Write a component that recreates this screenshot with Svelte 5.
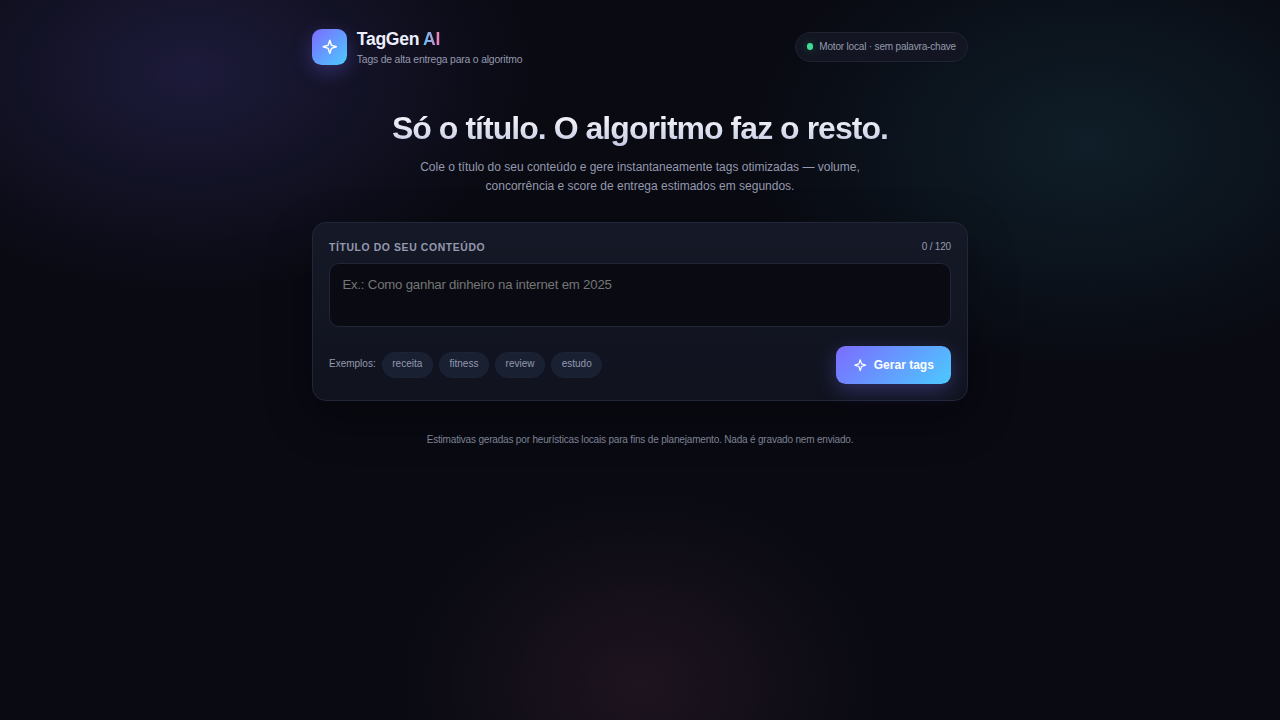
<script lang="ts">
	const maxLength = 120;
	const examples = [
		{ label: 'receita', title: 'Receita de bolo de cenoura fofinho' },
		{ label: 'fitness', title: 'Treino fitness em casa para iniciantes' },
		{ label: 'review', title: 'Review completo do novo celular' },
		{ label: 'estudo', title: 'Como criar um plano de estudo' }
	];

	let title = $state('');
</script>

{#snippet spark()}
	<svg class="spark" viewBox="0 0 24 24" aria-hidden="true">
		<path d="M12 3l2.2 6.8L21 12l-6.8 2.2L12 21l-2.2-6.8L3 12l6.8-2.2z" />
	</svg>
{/snippet}

<div class="page">
	<main class="shell">
		<header class="topbar">
			<div class="brand">
				<div class="logo">{@render spark()}</div>
				<div>
					<p class="name">TagGen <span>AI</span></p>
					<p class="tagline">Tags de alta entrega para o algoritmo</p>
				</div>
			</div>
			<div class="status"><span class="dot"></span>Motor local · sem palavra-chave</div>
		</header>

		<section class="hero">
			<h1>Só o título. O algoritmo faz o resto.</h1>
			<p>
				Cole o título do seu conteúdo e gere instantaneamente tags otimizadas — volume,
				concorrência e score de entrega estimados em segundos.
			</p>
		</section>

		<section class="card">
			<div class="field-head">
				<label for="title">Título do seu conteúdo</label>
				<span class="count">{title.length} / {maxLength}</span>
			</div>
			<textarea
				id="title"
				maxlength={maxLength}
				placeholder="Ex.: Como ganhar dinheiro na internet em 2025"
				bind:value={title}
			></textarea>
			<div class="actions">
				<div class="examples">
					<span>Exemplos:</span>
					{#each examples as example (example.label)}
						<button class="chip" type="button" onclick={() => (title = example.title)}>
							{example.label}
						</button>
					{/each}
				</div>
				<button class="generate" type="button">{@render spark()}Gerar tags</button>
			</div>
		</section>

		<footer>
			Estimativas geradas por heurísticas locais para fins de planejamento. Nada é gravado nem
			enviado.
		</footer>
	</main>
</div>

<style>
	:global(body) {
		background: #090a12;
	}

	.page {
		box-sizing: border-box;
		min-height: 100vh;
		background:
			radial-gradient(340px 220px at 15% 10%, rgba(124, 108, 255, 0.17), transparent),
			radial-gradient(340px 225px at 85% 20%, rgba(60, 190, 220, 0.11), transparent),
			radial-gradient(240px 195px at 50% 95%, rgba(255, 122, 170, 0.085), transparent),
			#090a12;
		color: #eceefb;
		font-family: 'Liberation Sans', Arial, sans-serif;
	}

	.shell {
		box-sizing: border-box;
		width: 656px;
		margin: 0 auto;
		padding-top: 28px;
	}

	h1,
	p {
		margin: 0;
	}

	button,
	textarea {
		font-family: inherit;
	}

	.spark {
		width: 17.6px;
		height: 17.6px;
		fill: none;
		stroke: #fff;
		stroke-width: 2;
		stroke-linejoin: round;
	}

	.topbar,
	.brand,
	.status,
	.field-head,
	.actions,
	.examples,
	.generate {
		display: flex;
		align-items: center;
	}

	.topbar,
	.field-head,
	.actions {
		justify-content: space-between;
	}

	.topbar {
		height: 38px;
	}

	.brand {
		gap: 9.6px;
	}

	.logo {
		display: grid;
		width: 35.2px;
		height: 35.2px;
		place-items: center;
		border-radius: 9.6px;
		background: linear-gradient(135deg, #7c6cff, #4cc9ff);
		box-shadow: 0 6.4px 19.2px rgba(124, 108, 255, 0.3);
	}

	.name {
		padding-top: 2px;
		font-size: 17.6px;
		font-weight: 700;
		letter-spacing: -0.3px;
		line-height: 20px;
	}

	.name span {
		background: linear-gradient(90deg, #4cc9ff, #ff7ab8);
		background-clip: text;
		color: transparent;
	}

	.tagline {
		margin-top: 4px;
		color: #9499ae;
		font-size: 10.4px;
		letter-spacing: -0.18px;
		line-height: 14px;
	}

	.status {
		box-sizing: border-box;
		gap: 6.4px;
		height: 30px;
		border: 1px solid #1e2231;
		border-radius: 999px;
		background: #131622;
		padding: 0 11px 1px;
		color: #9499ae;
		font-size: 10px;
		letter-spacing: -0.18px;
	}

	.dot {
		width: 6.4px;
		height: 6.4px;
		border-radius: 50%;
		background: #3ddc97;
		box-shadow: 0 0 8px rgba(61, 220, 151, 0.3);
	}

	.hero {
		margin-top: 43px;
		text-align: center;
	}

	h1 {
		background: linear-gradient(180deg, #fff, #c3c8e2);
		background-clip: text;
		color: transparent;
		font-size: 32px;
		letter-spacing: -0.96px;
		line-height: 38px;
	}

	.hero p {
		width: 460px;
		margin: 11px auto 0;
		color: #9499ae;
		font-size: 12px;
		line-height: 19.2px;
	}

	.card {
		box-sizing: border-box;
		height: 179px;
		margin-top: 26px;
		border: 1px solid #212638;
		border-radius: 14px;
		background: linear-gradient(180deg, #151927, #10131e);
		box-shadow: 0 16px 48px rgba(0, 0, 0, 0.3);
		padding: 16px;
	}

	.field-head {
		height: 15px;
	}

	label {
		padding-top: 1px;
		color: #9499ae;
		font-size: 10.4px;
		font-weight: 700;
		letter-spacing: 0.62px;
		text-transform: uppercase;
	}

	.count {
		color: #9499ae;
		font-size: 10px;
		letter-spacing: -0.18px;
	}

	textarea {
		display: block;
		box-sizing: border-box;
		width: 100%;
		height: 64px;
		margin: 9px 0 19px;
		border: 1px solid #212638;
		border-radius: 9.6px;
		outline: none;
		background: #0a0b12;
		padding: 11px 12.4px;
		color: #eceefb;
		font-size: 13.2px;
		letter-spacing: -0.19px;
		line-height: 19.2px;
		resize: none;
	}

	textarea::placeholder {
		color: #757575;
	}

	.examples {
		gap: 6px;
		color: #9499ae;
		font-size: 10px;
	}

	.examples > span {
		margin-top: -3px;
	}

	.chip {
		height: 26px;
		margin-top: -1px;
		border: 1px solid #1c2336;
		border-radius: 999px;
		background: #192032;
		padding: 0 9.6px 2px;
		color: #9499ae;
		font-size: 10px;
		cursor: pointer;
	}

	.generate {
		gap: 6.4px;
		height: 37.6px;
		border: 0;
		border-radius: 9.6px;
		background: linear-gradient(135deg, #7c6cff, #4cc9ff);
		box-shadow: 0 6.4px 19.2px rgba(124, 108, 255, 0.3);
		padding: 0 17.2px;
		color: #fff;
		font-size: 12px;
		font-weight: 700;
		cursor: pointer;
	}

	.generate .spark {
		width: 14.4px;
		height: 14.4px;
	}

	footer {
		margin-top: 32px;
		color: #7d8192;
		font-size: 10px;
		letter-spacing: -0.18px;
		line-height: 14px;
		text-align: center;
	}
</style>
